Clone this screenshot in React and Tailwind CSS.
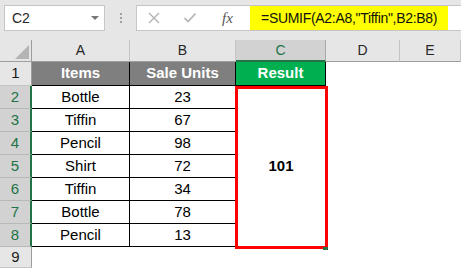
import React from "react";

const items = [
  ["Bottle", 23],
  ["Tiffin", 67],
  ["Pencil", 98],
  ["Shirt", 72],
  ["Tiffin", 34],
  ["Bottle", 78],
  ["Pencil", 13],
];

const ColHead = ({ label, selected }) => (
  <div
    className={
      selected
        ? "h-[22px] bg-[#d2d2d2] border-r border-[#ababab] border-b-2 border-b-[#217346] flex items-center justify-center text-[14px] text-[#217346]"
        : "h-[22px] bg-[#e6e6e6] border-r border-[#c4c4c4] border-b border-b-[#9e9e9e] flex items-center justify-center text-[14px] text-[#262626]"
    }
  >
    {label}
  </div>
);

const RowHead = ({ n, selected, h }) => (
  <div
    className={
      selected
        ? `${h} bg-[#d2d2d2] border-b border-[#b8b8b8] border-r-2 border-r-[#217346] flex items-center justify-center text-[15px] text-[#217346]`
        : `${h} bg-[#e6e6e6] border-b border-[#c4c4c4] border-r border-r-[#9e9e9e] flex items-center justify-center text-[15px] text-[#1a1a1a]`
    }
  >
    {n}
  </div>
);

export default function App() {
  return (
    <div className="w-[461px] h-[268px] overflow-hidden bg-white font-['Liberation_Sans',Arial,sans-serif]">
      {/* name box + formula bar */}
      <div className="h-[40px] bg-[#e6e6e6] flex items-start pt-[5px]">
        <div className="ml-[4px] w-[101px] h-[26px] bg-white border border-[#c6c6c6] flex items-center pl-[7px] pr-[5px] justify-between">
          <span className="text-[14px] text-[#262626]">C2</span>
          <svg width="8" height="5" viewBox="0 0 8 5">
            <polygon points="0,0 8,0 4,4" fill="#777777" />
          </svg>
        </div>
        <div className="w-[31px] h-[26px] flex flex-col items-center justify-center gap-[2px]">
          <div className="w-[2px] h-[2px] bg-[#a0a0a0]" />
          <div className="w-[2px] h-[2px] bg-[#a0a0a0]" />
          <div className="w-[2px] h-[2px] bg-[#a0a0a0]" />
        </div>
        <div className="flex-1 h-[26px] bg-white border border-[#c6c6c6] border-r-0 flex items-stretch">
          <div className="w-[113px] flex items-center pl-[11px]">
            <svg width="12" height="12" viewBox="0 0 12 12">
              <path d="M1 1 L11 11 M11 1 L1 11" stroke="#b3b3b3" strokeWidth="1.4" fill="none" />
            </svg>
            <svg className="ml-[24px]" width="12" height="12" viewBox="0 0 12 12">
              <path d="M0.5 6 L4 9.5 L11.5 1.5" stroke="#b3b3b3" strokeWidth="1.6" fill="none" />
            </svg>
            <span className="ml-[26px] italic text-[15px] text-[#555555] font-['Liberation_Serif',serif] leading-none">
              fx
            </span>
          </div>
          <div className="w-[198px] bg-[#ffff00] flex items-center pl-[11px] text-[14px] tracking-[-0.3px] text-[#111111]">
            =SUMIF(A2:A8,"Tiffin",B2:B8)
          </div>
        </div>
      </div>

      {/* sheet grid */}
      <div className="grid grid-cols-[32px_98px_106px_90px_74px_61px] grid-rows-[22px_24px_23px_23px_23px_23px_23px_23px_23px_21px]">
        <div className="h-[22px] bg-[#e6e6e6] border-r border-[#9e9e9e] border-b border-b-[#9e9e9e] relative">
          <svg className="absolute left-0 top-0" width="31" height="21" viewBox="0 0 31 21">
            <polygon points="29,5 29,19 15,19" fill="#b4b4b4" />
          </svg>
        </div>
        <ColHead label="A" />
        <ColHead label="B" />
        <ColHead label="C" selected />
        <ColHead label="D" />
        <ColHead label="E" />

        {/* row 1 */}
        <RowHead n={1} h="h-[24px]" />
        <div className="bg-[#7f7f7f] border-r border-b border-black flex items-center justify-center text-white font-bold text-[15px]">
          Items
        </div>
        <div className="bg-[#7f7f7f] border-r border-b border-black flex items-center justify-center text-white font-bold text-[15px]">
          Sale Units
        </div>
        <div className="bg-[#00b050] border-r border-b border-black flex items-center justify-center text-white font-bold text-[15px]">
          Result
        </div>
        <div />
        <div />

        {items.map(([name, units], i) => (
          <React.Fragment key={i}>
            <div className="col-start-1" style={{ gridRowStart: i + 3 }}>
              <RowHead n={i + 2} selected h="h-[23px]" />
            </div>
            <div
              className="col-start-2 border-r border-b border-black flex items-center justify-center text-[15px] text-black"
              style={{ gridRowStart: i + 3 }}
            >
              {name}
            </div>
            <div
              className="col-start-3 border-r border-b border-black flex items-center justify-center text-[15px] text-black"
              style={{ gridRowStart: i + 3 }}
            >
              {units}
            </div>
          </React.Fragment>
        ))}

        {/* merged result cell */}
        <div className="col-start-4 row-start-3 row-span-7 relative flex items-center justify-center font-bold text-[15px] text-black">
          101
          <div className="absolute left-[-1px] top-0 right-[-2px] bottom-[-2px] border-[3px] border-[#ff0000]" />
          <div className="absolute right-[-2px] bottom-[-3px] w-[5px] h-[3px] bg-[#217346]" />
        </div>

        {/* row 9 */}
        <div className="col-start-1 row-start-10">
          <RowHead n={9} h="h-[21px]" />
        </div>
      </div>
    </div>
  );
}
